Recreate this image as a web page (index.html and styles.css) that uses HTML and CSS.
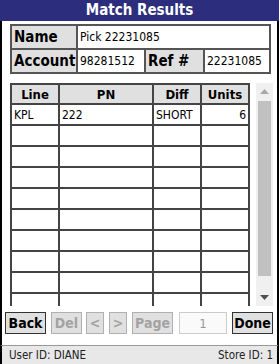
FILE: index.html
```html
<!DOCTYPE html>
<html>
<head>
<meta charset="utf-8">
<link rel="stylesheet" href="styles.css">
</head>
<body>
<div class="screen">
  <div class="title">Match Results</div>
  <div class="main">
    <table class="info">
      <colgroup><col class="c1"><col class="c2"><col class="c3"><col class="c4"></colgroup>
      <tr><th>Name</th><td colspan="3">Pick 22231085</td></tr>
      <tr><th>Account</th><td>98281512</td><th>Ref #</th><td>22231085</td></tr>
    </table>
    <div class="gridarea">
      <div class="gridclip">
        <table class="grid">
          <colgroup><col class="g1"><col class="g2"><col class="g3"><col class="g4"></colgroup>
          <tr><th>Line</th><th>PN</th><th>Diff</th><th>Units</th></tr>
          <tr><td>KPL</td><td>222</td><td>SHORT</td><td class="num">6</td></tr>
          <tr><td></td><td></td><td></td><td></td></tr>
          <tr><td></td><td></td><td></td><td></td></tr>
          <tr><td></td><td></td><td></td><td></td></tr>
          <tr><td></td><td></td><td></td><td></td></tr>
          <tr><td></td><td></td><td></td><td></td></tr>
          <tr><td></td><td></td><td></td><td></td></tr>
          <tr><td></td><td></td><td></td><td></td></tr>
          <tr><td></td><td></td><td></td><td></td></tr>
          <tr><td></td><td></td><td></td><td></td></tr>
        </table>
      </div>
      <div class="vscroll">
        <div class="sbtn"><svg width="9" height="5" viewBox="0 0 9 5"><polygon points="0,5 4.5,0 9,5" fill="#a8a8a8"/></svg></div>
        <div class="strack"><div class="sthumb"></div></div>
        <div class="sbtn"><svg width="9" height="5" viewBox="0 0 9 5"><polygon points="0,0 9,0 4.5,5" fill="#505050"/></svg></div>
      </div>
    </div>
    <div class="buttons">
      <button class="btn back">Back</button>
      <button class="btn dis del">Del</button>
      <button class="btn dis prev">&lt;</button>
      <button class="btn dis next">&gt;</button>
      <button class="btn dis page">Page</button>
      <input class="pageno" value="1" disabled>
      <button class="btn done">Done</button>
    </div>
  </div>
  <div class="status">
    <span>User ID: DIANE</span>
    <span>Store ID: 1</span>
  </div>
</div>
</body>
</html>
```
FILE: styles.css
```css
* { box-sizing: border-box; }
html, body { margin: 0; padding: 0; background: #fff; }
body {
  font-family: "DejaVu Sans Condensed", "DejaVu Sans", sans-serif;
  font-stretch: condensed;
  color: #000;
}
.screen {
  width: 279px;
  height: 364px;
  display: flex;
  flex-direction: column;
  overflow: hidden;
}
.title {
  height: 21px;
  background: #2d2d7d;
  color: #fff;
  font-weight: bold;
  font-size: 15px;
  line-height: 21px;
  text-align: center;
}
.main {
  flex: 1;
  border-left: 2px solid #000;
  border-right: 2px solid #000;
  padding: 3px 0 0 8px;
  display: flex;
  flex-direction: column;
}
.info {
  border-collapse: collapse;
  width: 259px;
  table-layout: fixed;
}
.info .c1 { width: 66px; }
.info .c2 { width: 68px; }
.info .c3 { width: 59px; }
.info .c4 { width: 66px; }
.info th, .info td {
  border: 2px solid #555;
  height: 24px;
  padding: 0 2px;
  text-align: left;
  white-space: nowrap;
  overflow: hidden;
}
.info th {
  background: #e0e0e0;
  font-size: 15px;
  font-weight: bold;
}
.info td {
  font-size: 12px;
}
.gridarea {
  margin-top: 9px;
  height: 223px;
  display: flex;
}
.gridclip {
  width: 246px;
  height: 100%;
  overflow: hidden;
}
.vscroll {
  width: 17px;
  height: 100%;
  background: #f0f0f0;
  display: flex;
  flex-direction: column;
}
.sbtn {
  height: 17px;
  display: flex;
  align-items: center;
  justify-content: center;
}
.strack {
  flex: 1;
  padding: 1px 2px 13px;
  display: flex;
}
.sthumb {
  flex: 1;
  background: #c1c1c1;
}
.grid {
  border-collapse: collapse;
  table-layout: fixed;
  width: 238px;
}
.g1 { width: 48px; }
.g2 { width: 94px; }
.g3 { width: 48px; }
.g4 { width: 48px; }
.grid th, .grid td {
  border: 2px solid #444;
  height: 21px;
  padding: 0 2px;
  white-space: nowrap;
}
.grid th {
  background: #e0e0e0;
  font-size: 13px;
  font-weight: bold;
  text-align: center;
  height: 20px;
}
.grid td { font-size: 12px; }
.grid td.num { text-align: right; }
.buttons {
  display: flex;
  align-items: center;
  margin-top: 6px;
  margin-left: -5px;
}
.btn {
  font-family: inherit;
  font-stretch: condensed;
  font-size: 14px;
  font-weight: bold;
  height: 22px;
  padding: 0;
  background: #e0e0e0;
  border: 1px solid #333;
  color: #000;
}
.btn.dis {
  color: #a3a3a3;
  border-color: #b0b0b0;
}
.back { width: 41px; }
.del { width: 31px; margin-left: 5px; }
.prev { width: 18px; margin-left: 4px; }
.next { width: 18px; margin-left: 5px; }
.page { width: 41px; margin-left: 5px; }
.pageno {
  width: 48px;
  height: 22px;
  margin-left: 6px;
  font-family: inherit;
  font-size: 13px;
  text-align: center;
  color: #999;
  background: #fafafa;
  border: 1px solid #ccc;
}
.done { width: 41px; margin-left: 5px; }
.status {
  height: 19px;
  background: #e8e8e8;
  border-top: 1px solid #999;
  border-left: 2px solid #000;
  border-right: 2px solid #000;
  display: flex;
  justify-content: space-between;
  align-items: center;
  padding: 0 4px 0 7px;
  font-size: 11.5px;
  color: #222;
}
```
